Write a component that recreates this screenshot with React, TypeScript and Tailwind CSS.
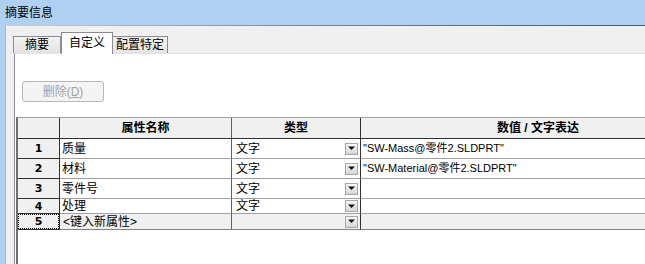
import React from "react"

const font = "font-['Liberation_Sans','Noto_Sans_CJK_SC',sans-serif]"

const rows = [
  { n: "1", name: "质量", type: "文字", value: '"SW-Mass@零件2.SLDPRT"', h: "h-[20px]" },
  { n: "2", name: "材料", type: "文字", value: '"SW-Material@零件2.SLDPRT"', h: "h-[20px]" },
  { n: "3", name: "零件号", type: "文字", value: "", h: "h-[20px]" },
  { n: "4", name: "处理", type: "文字", value: "", h: "h-[15px]" },
]

const DropButton = () => (
  <span className="shrink-0 flex items-center justify-center w-[13px] h-[12px] border border-[#a7a7a7] bg-gradient-to-b from-[#f7f7f7] to-[#d6d6d6]">
    <svg width="7" height="5" viewBox="0 0 7 5">
      <path d="M0 0.5h7L3.5 4z" fill="#111" />
    </svg>
  </span>
)

const App = () => {
  return (
    <div className={`w-[645px] h-[264px] overflow-hidden flex flex-col bg-[#afd0f1] text-black text-[12px] ${font}`}>
      <div className="h-[25px] flex items-center pl-[5px] leading-none">摘要信息</div>
      <div className="ml-[5px] h-[1px] bg-gradient-to-r from-[#c7d3df] via-[#6a84a0] to-[#3f5b79]" />

      <div className="flex-1 ml-[5px] flex flex-col bg-[#f0f0f0] border-l border-[#a8b6c5] min-w-0">
        {/* tabs */}
        <div className="h-[27px] flex items-end pl-[7px] leading-none">
          <div className="w-[48px] h-[17px] flex items-center justify-center border border-b-0 border-[#898c95] bg-gradient-to-b from-[#f3f3f3] to-[#e3e3e3]">
            摘要
          </div>
          <div className="relative z-10 -mb-[1px] w-[52px] h-[22px] flex items-start justify-center pt-[4px] border border-b-0 border-[#898c95] bg-white">
            自定义
          </div>
          <div className="w-[55px] h-[17px] flex items-center justify-center border border-b-0 border-l-0 border-[#898c95] bg-gradient-to-b from-[#f3f3f3] to-[#e3e3e3]">
            配置特定
          </div>
        </div>

        {/* panel */}
        <div className="flex-1 ml-[8px] flex flex-col bg-white border-l border-t border-l-[#898c95] border-t-[#e2e2e2] min-w-0">
          <button
            disabled
            className="ml-[7px] mt-[27px] w-[82px] h-[21px] flex items-center justify-center rounded-[3px] border border-[#b7b7b7] bg-[#f4f4f4] text-[#a3a3a3] leading-none"
          >
            删除(<span className="underline">D</span>)
          </button>

          {/* property grid */}
          <div className="mt-[15px] ml-[1px] flex-1 flex flex-col border-l-2 border-t border-l-[#6e6e6e] border-t-[#a0a0a0] leading-none">
            <div className="flex shrink-0 h-[21px] bg-[#f0f0f0] font-bold">
              <div className="shrink-0 w-[42px] border-r border-b border-[#303030]" />
              <div className="shrink-0 w-[172px] flex items-center justify-center border-r border-b border-r-[#606060] border-b-[#303030]">属性名称</div>
              <div className="shrink-0 w-[129px] flex items-center justify-center border-r border-b border-[#303030]">类型</div>
              <div className="shrink-0 w-[354px] flex items-center justify-center border-b border-[#303030]">数值 / 文字表达</div>
            </div>

            {rows.map((r) => (
              <div key={r.n} className={`flex shrink-0 ${r.h}`}>
                <div className="shrink-0 w-[42px] flex items-center justify-center bg-[#f0f0f0] border-r border-b border-[#303030] font-['DejaVu_Sans',sans-serif] font-bold text-[11px]">
                  {r.n}
                </div>
                <div className="shrink-0 w-[172px] flex items-center pl-[2px] border-r border-b border-r-[#606060] border-b-[#a0a0a0]">{r.name}</div>
                <div className="shrink-0 w-[129px] flex items-center justify-between pl-[4px] pr-[2px] border-r border-b border-r-[#303030] border-b-[#a0a0a0]">
                  <span>{r.type}</span>
                  <DropButton />
                </div>
                <div className="shrink-0 w-[354px] flex items-center pl-[2px] border-b border-[#a0a0a0] whitespace-nowrap text-[11px]">{r.value}</div>
              </div>
            ))}

            <div className="flex shrink-0 h-[16px] bg-[#f0f0f0]">
              <div className="shrink-0 w-[42px] border-r border-b border-[#303030]">
                <div className="h-full flex items-center justify-center border border-dotted border-black font-['DejaVu_Sans',sans-serif] font-bold text-[11px]">
                  5
                </div>
              </div>
              <div className="shrink-0 w-[172px] flex items-center pl-[3px] border-r border-b border-r-[#606060] border-b-[#808080]">&lt;键入新属性&gt;</div>
              <div className="shrink-0 w-[129px] flex items-center justify-end pr-[2px] border-r border-b border-r-[#303030] border-b-[#808080]">
                <DropButton />
              </div>
              <div className="shrink-0 w-[354px] border-b border-[#808080]" />
            </div>
            <div className="flex-1 bg-white" />
          </div>
        </div>
      </div>
    </div>
  )
}

export default App
